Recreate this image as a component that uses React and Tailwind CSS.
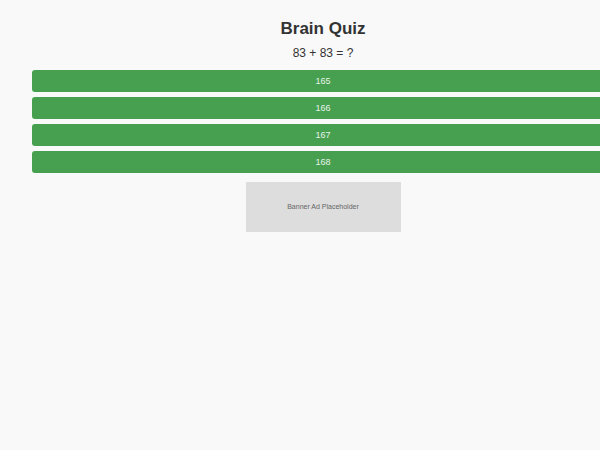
import React from 'react';

const OPTIONS = [165, 166, 167, 168];

function App() {
  return (
    <div className="w-[600px] h-[450px] overflow-hidden bg-[#f9f9f9] font-['Liberation_Sans',Arial,sans-serif] text-[#333]">
      <div className="ml-[32px] w-[582px] pt-[19px] flex flex-col items-center">
        <h1 className="text-[17px] leading-[20px] font-bold text-[#333]">Brain Quiz</h1>
        <p className="mt-[7px] text-[12px] leading-[14px] text-[#333]">83 + 83 = ?</p>
        <div className="mt-[10px] w-full flex flex-col gap-[5px]">
          {OPTIONS.map((n) => (
            <button
              key={n}
              className="w-full h-[22px] rounded-[3px] bg-[#46a050] text-[#e8f3e9] text-[9px] leading-[22px]"
            >
              {n}
            </button>
          ))}
        </div>
        <div className="mt-[9px] w-[155px] h-[50px] bg-[#dddddd] flex items-center justify-center text-[7px] text-[#666]">
          Banner Ad Placeholder
        </div>
      </div>
    </div>
  );
}

export default App;
